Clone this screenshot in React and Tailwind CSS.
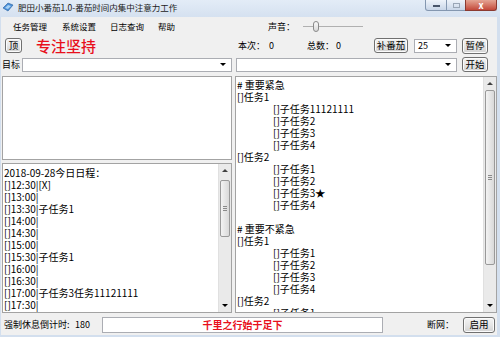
import React from 'react';

const scheduleLines = [
  '2018-09-28今日日程：',
  '[]12:30|[X]',
  '[]13:00|',
  '[]13:30|子任务1',
  '[]14:00|',
  '[]14:30|',
  '[]15:00|',
  '[]15:30|子任务1',
  '[]16:00|',
  '[]16:30|',
  '[]17:00|子任务3任务11121111',
  '[]17:30|',
];

// [indent, text]
const taskLines = [
  [0, '# 重要紧急'],
  [0, '[]任务1'],
  [1, '[]子任务11121111'],
  [1, '[]子任务2'],
  [1, '[]子任务3'],
  [1, '[]子任务4'],
  [0, '[]任务2'],
  [1, '[]子任务1'],
  [1, '[]子任务2'],
  [1, '[]子任务3★'],
  [1, '[]子任务4'],
  [0, ' '],
  [0, '# 重要不紧急'],
  [0, '[]任务1'],
  [1, '[]子任务1'],
  [1, '[]子任务2'],
  [1, '[]子任务3'],
  [1, '[]子任务4'],
  [0, '[]任务2'],
  [1, '[]子任务1'],
];

const WinButton = ({ children, className }) => (
  <div
    className={`flex items-center justify-center rounded-[3px] border border-[#707070] bg-gradient-to-b from-[#f4f4f4] via-[#e6e6e6] to-[#d2d2d2] text-[9.5px] leading-none text-black shadow-[inset_0_0_0_1px_#fbfbfb] ${className}`}
  >
    {children}
  </div>
);

const DownTri = () => (
  <span className="h-0 w-0 border-l-[3px] border-r-[3px] border-t-[3px] border-l-transparent border-r-transparent border-t-black" />
);

const UpTri = () => (
  <span className="h-0 w-0 border-l-[3px] border-r-[3px] border-b-[3px] border-l-transparent border-r-transparent border-b-[#404040]" />
);

const Combo = ({ value, className }) => (
  <div className={`flex items-center justify-between border border-[#abadb3] bg-white pl-[3px] pr-[5px] text-[9px] leading-none ${className}`}>
    <span>{value}</span>
    <DownTri />
  </div>
);

const ScrollBar = ({ gap, thumb }) => (
  <div className="flex w-[13px] flex-col bg-[#eaeaea] border-l border-[#e0e0e0]">
    <div className="flex h-[13px] items-center justify-center">
      <UpTri />
    </div>
    <div className={gap} />
    <div
      className={`mx-[1px] flex flex-col items-center justify-center gap-[1px] rounded-[2px] border border-[#999999] bg-gradient-to-r from-[#f3f3f3] to-[#d9d9d9] ${thumb}`}
    >
      <span className="h-[1px] w-[4px] bg-[#8a8a8a]" />
      <span className="h-[1px] w-[4px] bg-[#8a8a8a]" />
      <span className="h-[1px] w-[4px] bg-[#8a8a8a]" />
    </div>
    <div className="flex-1" />
    <div className="flex h-[13px] items-center justify-center">
      <DownTri />
    </div>
  </div>
);

export default function App() {
  return (
    <div className="flex h-[337px] w-[500px] flex-col overflow-hidden bg-[#d3dfee] font-['Noto_Sans_CJK_SC',sans-serif] text-black">
      {/* 标题栏 */}
      <div className="flex h-[17px] items-start bg-gradient-to-b from-[#e3ecf7] to-[#d5e1f0]">
        <div className="flex h-[14px] flex-1 items-center">
          <svg width="12" height="12" viewBox="0 0 12 12" className="ml-[2px]">
            <path d="M1 7 L6 2 L11 4 L6 10 Z" fill="#4a8fd8" stroke="#2a5f9e" strokeWidth="0.6" />
            <path d="M3 7 L6 4 L9 5 L6 8 Z" fill="#a9d3f5" />
          </svg>
          <span className="ml-[4px] text-[8.5px] leading-none text-[#1b1b1b]">肥田小番茄1.0-番茄时间内集中注意力工作</span>
        </div>
        <div className="mr-[3px] flex h-[11px]">
          <div className="flex w-[22px] items-end justify-center rounded-bl-[3px] border border-t-0 border-[#8497b0] bg-gradient-to-b from-[#eef3fa] to-[#c9d6e8] pb-[3px]">
            <span className="h-[2px] w-[7px] border border-[#48556a] bg-white" />
          </div>
          <div className="flex w-[18px] items-center justify-center border-b border-[#8497b0] bg-gradient-to-b from-[#eef3fa] to-[#c9d6e8]">
            <span className="h-[5px] w-[7px] border border-[#9aa6b6]" />
          </div>
          <div className="flex w-[32px] items-center justify-center rounded-br-[3px] border border-t-0 border-[#8b3a30] bg-gradient-to-b from-[#e4a494] to-[#c2473a] text-[9px] font-bold leading-none text-white">
            x
          </div>
        </div>
      </div>

      {/* 客户区 */}
      <div className="ml-[1px] mr-[3px] flex h-[318px] flex-col bg-[#f0f0f0]">
        {/* 菜单栏 */}
        <div className="flex h-[19px] items-center text-[8.5px] leading-none">
          <span className="ml-[12px] w-[49px]">任务管理</span>
          <span className="w-[48px]">系统设置</span>
          <span className="w-[48px]">日志查询</span>
          <span className="w-[48px]">帮助</span>
          <span className="ml-[62px] w-[35px] text-[9px]">声音：</span>
          <div className="flex h-[12px] w-[60px] items-center">
            <span className="h-[1px] w-[10px] bg-[#b0b0b0]" />
            <span className="h-[11px] w-[6px] rounded-[3px] border border-[#8a8a8a] bg-gradient-to-b from-[#fafafa] to-[#d8d8d8]" />
            <span className="h-[1px] flex-1 bg-[#b0b0b0]" />
          </div>
        </div>

        {/* 第二行 */}
        <div className="flex h-[19px] items-center text-[9px] leading-none">
          <WinButton className="ml-[4px] h-[15px] w-[17px]">顶</WinButton>
          <span className="ml-[14px] w-[202px] text-[15px] font-medium text-[#e8101c]">专注坚持</span>
          <span className="w-[31px]">本次：</span>
          <span className="w-[38px]">0</span>
          <span className="w-[29px]">总数：</span>
          <span className="w-[38px]">0</span>
          <WinButton className="h-[15px] w-[34px]">补番茄</WinButton>
          <Combo value="25" className="ml-[6px] h-[14px] w-[43px]" />
          <WinButton className="ml-[5px] h-[16px] w-[26px]">暂停</WinButton>
        </div>

        {/* 第三行 */}
        <div className="mt-[2px] flex h-[15px] items-center text-[9px] leading-none">
          <span className="ml-[1px] w-[20px]">目标</span>
          <Combo value="" className="h-[14px] w-[210px]" />
          <Combo value="" className="ml-[4px] h-[14px] w-[221px]" />
          <WinButton className="ml-[5px] h-[15px] w-[26px]">开始</WinButton>
        </div>

        {/* 主体 */}
        <div className="mt-[4px] flex h-[237px]">
          <div className="ml-[1px] flex w-[230px] flex-col gap-[3px]">
            <div className="h-[84px] border border-[#a3a3a3] bg-white" />
            <div className="flex h-[150px] border border-[#a3a3a3] bg-white">
              <div className="flex-1 overflow-hidden pl-[1px] pt-[3px] text-[10px] leading-[12px]">
                {scheduleLines.map((line, i) => (
                  <div key={i} className="whitespace-pre">{line}</div>
                ))}
              </div>
              <ScrollBar gap="h-[3px]" thumb="h-[57px]" />
            </div>
          </div>
          <div className="ml-[3px] flex w-[262px] border border-[#a3a3a3] bg-white">
            <div className="flex-1 overflow-hidden pl-[1px] pt-[2px] text-[10px] leading-[12px]">
              {taskLines.map(([indent, text], i) => (
                <div key={i} className={indent ? 'whitespace-pre pl-[36px]' : 'whitespace-pre'}>
                  {text}
                </div>
              ))}
            </div>
            <ScrollBar gap="h-[0px]" thumb="h-[175px]" />
          </div>
        </div>

        {/* 底部 */}
        <div className="mt-[3px] flex h-[17px] items-center text-[9px] leading-none">
          <span className="ml-[3px] w-[71px]">强制休息倒计时:</span>
          <span className="w-[27px]">180</span>
          <div className="flex h-[16px] w-[281px] items-center justify-center border border-[#abadb3] bg-white text-[10px] font-bold text-[#e8101c]">
            千里之行始于足下
          </div>
          <span className="ml-[44px] w-[36px]">断网：</span>
          <WinButton className="h-[16px] w-[32px]">启用</WinButton>
        </div>
      </div>
    </div>
  );
}
